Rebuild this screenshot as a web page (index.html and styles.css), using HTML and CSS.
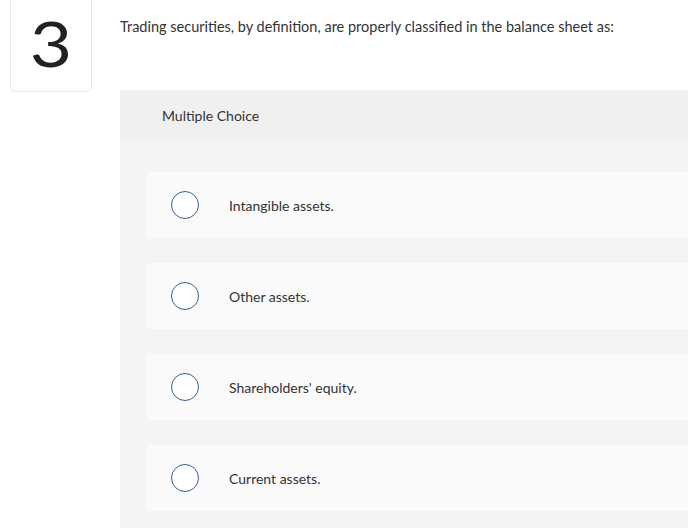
FILE: index.html
```html
<!DOCTYPE html>
<html>
<head>
<meta charset="utf-8">
<link rel="stylesheet" href="styles.css">
</head>
<body>
<div class="page">
  <div class="num-col">
    <div class="num-box"><span class="digit">3</span></div>
  </div>
  <div class="main">
    <p class="question">Trading securities, by definition, are properly classified in the balance sheet as:</p>
    <div class="panel">
      <div class="panel-head">Multiple Choice</div>
      <div class="panel-body">
        <div class="option"><span class="radio"></span><span class="label">Intangible assets.</span></div>
        <div class="option"><span class="radio"></span><span class="label">Other assets.</span></div>
        <div class="option"><span class="radio"></span><span class="label">Shareholders' equity.</span></div>
        <div class="option"><span class="radio"></span><span class="label">Current assets.</span></div>
      </div>
    </div>
  </div>
</div>
</body>
</html>
```

FILE: styles.css
```css
html, body {
  margin: 0;
  padding: 0;
  background: #ffffff;
  overflow: hidden;
  width: 688px;
  height: 528px;
}
.page {
  display: flex;
  font-family: "Lato", "Liberation Sans", sans-serif;
  color: #333333;
  width: 800px;
}
.num-col {
  width: 120px;
  flex: none;
  padding-left: 10px;
  box-sizing: border-box;
}
.num-box {
  width: 82px;
  height: 100px;
  margin-top: -8px;
  border: 1px solid #e8e8e8;
  border-radius: 5px;
  box-sizing: border-box;
  display: flex;
  align-items: center;
  justify-content: center;
  padding-top: 2px;
  font-family: "Lato", "Liberation Sans", sans-serif;
  font-weight: 400;
  font-size: 62px;
  color: #222222;
}
.digit {
  display: inline-block;
  transform: scaleX(1.18);
}
.main {
  flex: 1;
}
.question {
  margin: 17px 0 0 0;
  font-size: 14.5px;
  line-height: 20px;
  color: #333333;
}
.panel {
  margin-top: 53px;
  background: #f4f4f4;
  height: 500px;
}
.panel-head {
  background: #f0f0f0;
  height: 50px;
  display: flex;
  align-items: center;
  padding-left: 42px;
  font-size: 14px;
  color: #333333;
}
.panel-body {
  padding: 32px 0 0 26px;
  display: flex;
  flex-direction: column;
  gap: 25px;
}
.option {
  height: 66px;
  background: #fafafa;
  border-radius: 4px 0 0 4px;
  display: flex;
  align-items: center;
  padding-left: 25px;
}
.radio {
  width: 26px;
  height: 26px;
  border: 1.5px solid #33618f;
  border-radius: 50%;
  flex: none;
  background: #ffffff;
}
.label {
  margin-left: 30px;
  font-size: 14px;
  color: #333333;
}
```
